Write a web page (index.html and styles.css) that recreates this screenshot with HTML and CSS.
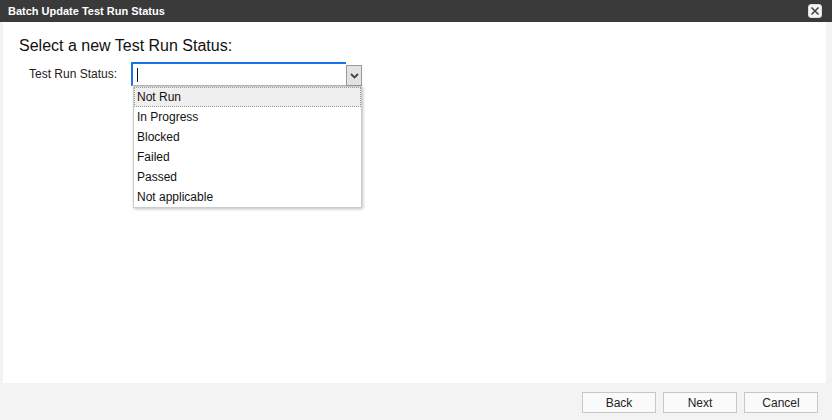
FILE: index.html
```html
<!DOCTYPE html>
<html>
<head>
<meta charset="utf-8">
<link rel="stylesheet" href="styles.css">
</head>
<body>
<div class="dialog">
  <div class="titlebar">
    <span class="title">Batch Update Test Run Status</span>
    <span class="close">
      <svg width="10" height="10" viewBox="0 0 10 10"><path d="M1.5 1.5 L8.5 8.5 M8.5 1.5 L1.5 8.5" stroke="#444" stroke-width="1.6" fill="none"/></svg>
    </span>
  </div>
  <div class="content">
    <div class="panel">
      <h1 class="heading">Select a new Test Run Status:</h1>
      <div class="row">
        <label class="label">Test Run Status:</label>
        <div class="combo">
          <div class="input"><span class="caret"></span></div>
          <div class="arrow">
            <svg width="9" height="6" viewBox="0 0 9 6"><path d="M1 1 L4.5 4.5 L8 1" stroke="#444" stroke-width="1.8" fill="none"/></svg>
          </div>
          <ul class="list">
            <li class="item active">Not Run</li>
            <li class="item">In Progress</li>
            <li class="item">Blocked</li>
            <li class="item">Failed</li>
            <li class="item">Passed</li>
            <li class="item">Not applicable</li>
          </ul>
        </div>
      </div>
    </div>
    <div class="footer">
      <button class="btn">Back</button>
      <button class="btn">Next</button>
      <button class="btn">Cancel</button>
    </div>
  </div>
</div>
</body>
</html>
```
FILE: styles.css
```css
html, body {
  margin: 0;
  padding: 0;
}
body {
  width: 832px;
  height: 420px;
  overflow: hidden;
  font-family: "Liberation Sans", Arial, sans-serif;
  background: #f3f3f3;
}
.dialog {
  display: flex;
  flex-direction: column;
  height: 420px;
}
.titlebar {
  height: 22px;
  background: #3a3a3a;
  display: flex;
  align-items: center;
  justify-content: space-between;
  padding: 0 10px 0 8px;
}
.title {
  color: #fff;
  font-weight: bold;
  font-size: 11px;
}
.close {
  width: 14px;
  height: 14px;
  background: #f4f4f4;
  border-radius: 3px;
  display: flex;
  align-items: center;
  justify-content: center;
  box-sizing: border-box;
  border: 1px solid #ddd;
}
.content {
  flex: 1;
  display: flex;
  flex-direction: column;
  background: #f3f3f3;
}
.panel {
  height: 361px;
  margin: 0 6px 0 3px;
  background: #fff;
  padding: 15px 16px 0;
  box-sizing: border-box;
}
.heading {
  margin: 0;
  font-size: 16px;
  font-weight: normal;
  line-height: 18px;
  color: #111;
}
.row {
  display: flex;
  align-items: center;
  margin-top: 7px;
  margin-left: 10px;
}
.label {
  width: 102px;
  font-size: 12px;
  color: #222;
}
.combo {
  position: relative;
  display: flex;
}
.input {
  border-top: 2px solid #1a73e8;
  border-left: 2px solid #1a73e8;
  border-bottom: 1px solid #bbb;
  display: flex;
  align-items: center;
  padding-left: 4px;
  box-sizing: border-box;
  width: 215px;
  height: 24px;
}
.caret {
  width: 1px;
  height: 14px;
  background: #111;
}
.arrow {
  width: 16px;
  height: 21px;
  margin-top: 3px;
  box-sizing: border-box;
  border: 1px solid #999;
  background: #e3e3e3;
  display: flex;
  align-items: center;
  justify-content: center;
}
.list {
  position: absolute;
  left: 2px;
  top: 24px;
  width: 229px;
  margin: 0;
  padding: 0;
  list-style: none;
  background: #fff;
  border: 1px solid #ccc;
  box-sizing: border-box;
  box-shadow: 1px 1px 3px rgba(0,0,0,0.25);
}
.item {
  height: 20px;
  line-height: 20px;
  font-size: 12px;
  padding-left: 3px;
  color: #111;
  box-sizing: border-box;
}
.item.active {
  background: #efefef;
  border: 1px dotted #999;
  line-height: 18px;
  padding-left: 2px;
}
.footer {
  flex: 1;
  display: flex;
  justify-content: flex-end;
  align-items: flex-start;
  gap: 7px;
  padding: 9px 14px 0 0;
}
.btn {
  width: 74px;
  height: 21px;
  background: #fafafa;
  border: 1px solid #c8c8c8;
  font-family: "Liberation Sans", Arial, sans-serif;
  font-size: 12px;
  color: #222;
  padding: 0;
}
```
